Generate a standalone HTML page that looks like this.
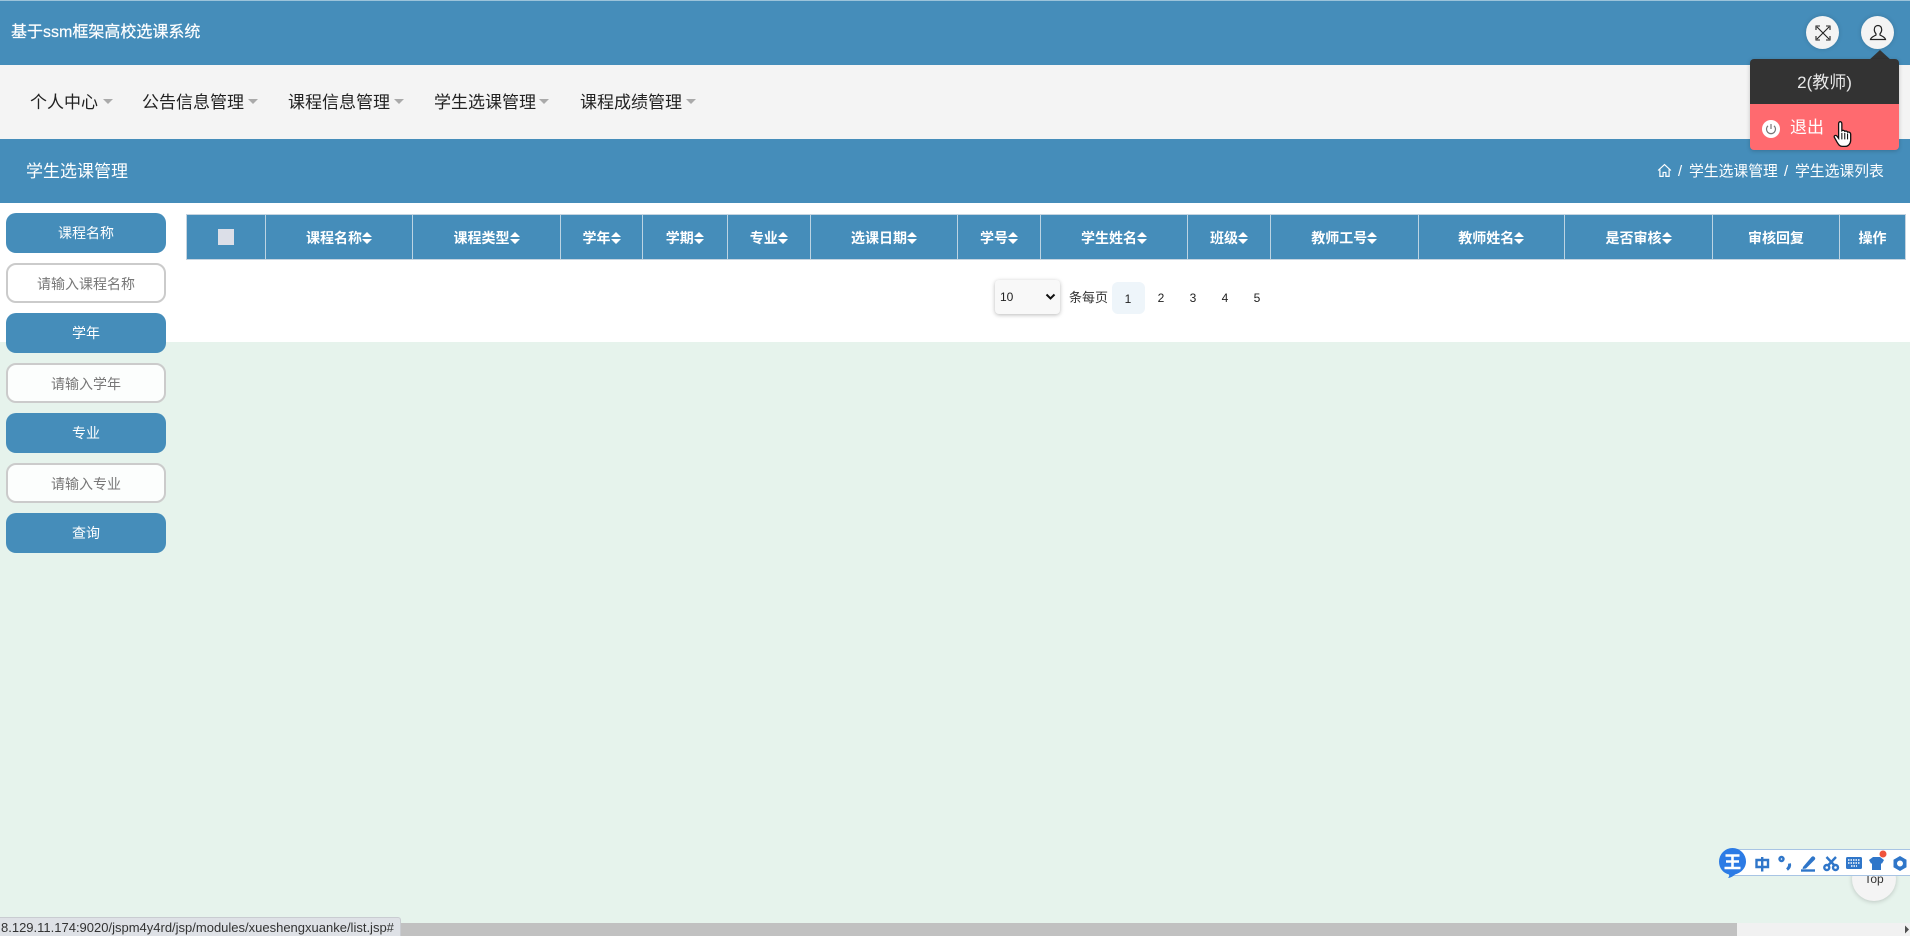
<!DOCTYPE html>
<html lang="zh">
<head>
<meta charset="utf-8">
<title>学生选课管理</title>
<style>
*{box-sizing:border-box;margin:0;padding:0}
html,body{width:1910px;height:936px;overflow:hidden;background:#e6f3ec;font-family:"Liberation Sans","Noto Sans CJK SC",sans-serif;color:#222}
.a{position:absolute}
#top{left:0;top:0;width:1910px;height:65px;background:#458dba;border-top:1px solid #9cc3da}
#title{left:11px;top:23px;font-size:16px;line-height:20px;color:#fff;white-space:nowrap;-webkit-text-stroke:.2px #fff}
.circle{width:33px;height:33px;border-radius:50%;background:#f4f4f4;top:16px;box-shadow:0 0 5px rgba(0,0,0,.15);display:flex;align-items:center;justify-content:center}
#nav{left:0;top:65px;width:1910px;height:74px;background:#f4f4f4}
.ni{top:92px;font-size:17px;line-height:22px;color:#222;white-space:nowrap}
.car{top:99px;width:0;height:0;border-left:5px solid transparent;border-right:5px solid transparent;border-top:5px solid #aaa}
#sub{left:0;top:139px;width:1910px;height:64px;background:#458dba}
#subt{left:26px;top:161px;font-size:17px;line-height:22px;color:#fff}
.bc{top:162px;font-size:14.8px;line-height:20px;color:#fff;white-space:nowrap}
#panel{left:0;top:203px;width:1910px;height:139px;background:#fff}
.sb{left:6px;width:160px;height:40px;border-radius:10px;background:#458dba;color:#fff;font-size:14px;text-align:center;line-height:40px}
.si{left:6px;width:160px;height:40px;border-radius:10px;border:2px solid #cbcbcb;background:rgba(255,255,255,.87);color:#777;font-size:14px;text-align:center;line-height:38px}
#thead{left:187px;top:215px;width:1718px;height:44px;background:#458dba;display:flex;box-shadow:0 0 0 1px #c5d4e0}
.th{height:44px;display:flex;align-items:center;justify-content:center;color:#fff;font-size:14px;font-weight:bold;border-right:1px solid #bcd4e3;white-space:nowrap;padding-top:1px}
.th:last-child{border-right:none}
.th svg{display:block}
#cb{left:218px;top:229px;width:16px;height:16px;background:#dcdfe8}
#sel{left:995px;top:280px;width:65px;height:34px;border-radius:4px;background:#f8f8f8;box-shadow:0 1px 4px rgba(0,0,0,.28);font-size:12px;line-height:34px;padding-left:5px;color:#222}
.pg{top:288px;font-size:12px;line-height:20px;color:#222;text-align:center;width:20px}
#p1{left:1112px;top:282px;width:33px;height:32px;background:#eef5fa;border-radius:6px}
#drop{left:1750px;top:59px;width:149px;height:91px;border-radius:4px;overflow:hidden;box-shadow:0 1px 4px rgba(0,0,0,.2)}
#d1{height:45px;background:#333;color:#e8e8e8;font-size:17px;line-height:47px;text-align:center}
#d2{height:46px;background:#ff6a6f;color:#fff;font-size:17px;line-height:48px;padding-left:40px}
#scr{left:0;top:923px;width:1910px;height:13px;background:#f1f1f1}
#thumb{left:401px;top:923px;width:1336px;height:13px;background:#c1c1c1}
#status{left:0;top:917px;width:401px;height:19px;background:#dee1e6;border-top:1px solid #c9ccd1;border-right:1px solid #c9ccd1;border-top-right-radius:3px;font-size:13px;line-height:19px;padding-left:1px;color:#333;white-space:nowrap;overflow:hidden}
#totop{left:1852px;top:857px;width:44px;height:44px;border-radius:50%;background:#f4f4f4;box-shadow:0 1px 5px rgba(0,0,0,.18);font-size:12px;color:#333;text-align:center;line-height:44px}
#ime{left:1733px;top:849px;width:177px;height:27px;background:#fff;border:1px solid #a8c4e4;border-right:none}
</style>
</head>
<body>
<div class="a" id="top"></div>
<div class="a" id="title">基于ssm框架高校选课系统</div>
<div class="a circle" style="left:1806px">
<svg width="20" height="20" viewBox="0 0 20 20" fill="none" stroke="#222" stroke-width="1.1"><path d="M4 4L16 16M16 4L4 16M3 7V3H7M13 3H17V7M3 13V17H7M17 13V17H13"/></svg>
</div>
<div class="a circle" style="left:1861px">
<svg width="20" height="20" viewBox="0 0 20 20" fill="none" stroke="#222" stroke-width="1.200"><path d="M10 2.500C7.600 2.500 6.300 4.300 6.300 6.600C6.300 8.800 7.300 10 8 10.800V12C6.500 13 3 14 2.500 16.500H17.500C17 14 13.500 13 12 12V10.800C12.700 10 13.700 8.800 13.700 6.600C13.700 4.300 12.400 2.500 10 2.500Z"/></svg>
</div>

<div class="a" id="nav"></div>
<div class="a ni" style="left:30px">个人中心</div><div class="a car" style="left:103px"></div>
<div class="a ni" style="left:142px">公告信息管理</div><div class="a car" style="left:248px"></div>
<div class="a ni" style="left:288px">课程信息管理</div><div class="a car" style="left:394px"></div>
<div class="a ni" style="left:434px">学生选课管理</div><div class="a car" style="left:539px"></div>
<div class="a ni" style="left:580px">课程成绩管理</div><div class="a car" style="left:686px"></div>

<div class="a" id="sub"></div>
<div class="a" id="subt">学生选课管理</div>
<svg class="a" style="left:1657px;top:163px" width="15" height="15" viewBox="0 0 14 14" fill="none" stroke="#fff" stroke-width="1.1"><path d="M1 7L7 1.500L13 7M2.700 6V12.500H5.700V8.800H8.300V12.500H11.300V6"/></svg>
<div class="a bc" style="left:1678px">/</div>
<div class="a bc" style="left:1689px">学生选课管理</div>
<div class="a bc" style="left:1784px">/</div>
<div class="a bc" style="left:1795px">学生选课列表</div>

<div class="a" id="panel"></div>

<div class="a sb" style="top:213px">课程名称</div>
<div class="a si" style="top:263px">请输入课程名称</div>
<div class="a sb" style="top:313px">学年</div>
<div class="a si" style="top:363px">请输入学年</div>
<div class="a sb" style="top:413px">专业</div>
<div class="a si" style="top:463px">请输入专业</div>
<div class="a sb" style="top:513px">查询</div>

<div class="a" id="thead">
<div class="th" style="width:79px"></div>
<div class="th" style="width:147px">课程名称<svg width="10" height="12" viewBox="0 0 10 12" fill="#fff"><path d="M5 0L10 5H0ZM0 7H10L5 12Z"/></svg></div>
<div class="th" style="width:148px">课程类型<svg width="10" height="12" viewBox="0 0 10 12" fill="#fff"><path d="M5 0L10 5H0ZM0 7H10L5 12Z"/></svg></div>
<div class="th" style="width:82px">学年<svg width="10" height="12" viewBox="0 0 10 12" fill="#fff"><path d="M5 0L10 5H0ZM0 7H10L5 12Z"/></svg></div>
<div class="th" style="width:84.5px">学期<svg width="10" height="12" viewBox="0 0 10 12" fill="#fff"><path d="M5 0L10 5H0ZM0 7H10L5 12Z"/></svg></div>
<div class="th" style="width:83.5px">专业<svg width="10" height="12" viewBox="0 0 10 12" fill="#fff"><path d="M5 0L10 5H0ZM0 7H10L5 12Z"/></svg></div>
<div class="th" style="width:147px">选课日期<svg width="10" height="12" viewBox="0 0 10 12" fill="#fff"><path d="M5 0L10 5H0ZM0 7H10L5 12Z"/></svg></div>
<div class="th" style="width:83px">学号<svg width="10" height="12" viewBox="0 0 10 12" fill="#fff"><path d="M5 0L10 5H0ZM0 7H10L5 12Z"/></svg></div>
<div class="th" style="width:147px">学生姓名<svg width="10" height="12" viewBox="0 0 10 12" fill="#fff"><path d="M5 0L10 5H0ZM0 7H10L5 12Z"/></svg></div>
<div class="th" style="width:83px">班级<svg width="10" height="12" viewBox="0 0 10 12" fill="#fff"><path d="M5 0L10 5H0ZM0 7H10L5 12Z"/></svg></div>
<div class="th" style="width:147.5px">教师工号<svg width="10" height="12" viewBox="0 0 10 12" fill="#fff"><path d="M5 0L10 5H0ZM0 7H10L5 12Z"/></svg></div>
<div class="th" style="width:146.5px">教师姓名<svg width="10" height="12" viewBox="0 0 10 12" fill="#fff"><path d="M5 0L10 5H0ZM0 7H10L5 12Z"/></svg></div>
<div class="th" style="width:148px">是否审核<svg width="10" height="12" viewBox="0 0 10 12" fill="#fff"><path d="M5 0L10 5H0ZM0 7H10L5 12Z"/></svg></div>
<div class="th" style="width:127px">审核回复</div>
<div class="th" style="width:65px">操作</div>
</div>
<div class="a" id="cb"></div>

<div class="a" id="sel">10</div>
<svg class="a" style="left:1045px;top:293px" width="11" height="8" viewBox="0 0 11 8" fill="none" stroke="#111" stroke-width="2"><path d="M1.500 1.500L5.500 5.500L9.500 1.500"/></svg>
<div class="a" style="left:1069px;top:288px;font-size:13px;line-height:20px;color:#333">条每页</div>
<div class="a" id="p1"></div>
<div class="a pg" style="left:1118px;top:289px">1</div>
<div class="a pg" style="left:1151px">2</div>
<div class="a pg" style="left:1183px">3</div>
<div class="a pg" style="left:1215px">4</div>
<div class="a pg" style="left:1247px">5</div>

<svg class="a" style="left:1868px;top:50px" width="24" height="11" viewBox="0 0 24 11"><path d="M12 0L24 11H0Z" fill="#333"/></svg>
<div class="a" id="drop">
<div id="d1">2(教师)</div>
<div id="d2">退出</div>
</div>
<svg class="a" style="left:1762px;top:120px" width="18" height="18" viewBox="0 0 18 18"><circle cx="9" cy="9" r="9" fill="#fff"/><path d="M9 4V9M6 5.800A4.500 4.500 0 1 0 12 5.800" fill="none" stroke="#777" stroke-width="1.200"/></svg>
<svg class="a" style="left:1833px;top:120px" width="22" height="28" viewBox="0 0 20 26"><path d="M5.500 2C6.800 1 8 2 8 3.500V10C9 9.300 10.300 9.500 10.700 10.500C11.800 10 13 10.300 13.300 11.300C14.500 10.900 16 11.500 16.200 13V19C16 22 14 24.500 11 24.500H8.500C6 24.500 5 23 3.500 20.500L1 16C0.500 14.700 2.200 13.500 3.500 15L5 17V3.500C5 3 5.200 2.400 5.500 2Z" fill="#fff" stroke="#111" stroke-width="1.200"/><path d="M8 12V18M10.700 12V18M13.300 12.500V18" stroke="#111" stroke-width="1"/></svg>

<div class="a" id="totop">Top</div>

<div class="a" id="ime"></div>
<svg class="a" style="left:1719px;top:848px" width="191" height="32" viewBox="0 0 191 32">
<path d="M13.500 0A13.500 13.500 0 0 1 27 13.500C27 20 22 25 16 26.500C14 28.500 11 30 9 30C10 29 10.500 27.500 10 26.500C4 25 0 20 0 13.500A13.500 13.500 0 0 1 13.500 0Z" fill="#2c7be5"/>
<path d="M6.500 7.500H20.500M7 13.500H20M5.500 20H21.500M13.500 7.500V20" stroke="#fff" stroke-width="2.600" fill="none"/>
<g fill="none" stroke="#2f76c9" stroke-width="2.400">
<path d="M37.500 12H49V19H37.500ZM43.200 9V23.500"/>
<circle cx="62.500" cy="11" r="2"/>
<path d="M70.500 15.500C71 18 70 20 68 21.500" stroke-width="3"/>
<path d="M82 22.500H96"/>
<path d="M107.500 9L116 18M117 9L108.500 18"/>
<circle cx="107.800" cy="19.500" r="2.500"/><circle cx="116.500" cy="19.500" r="2.500"/>
</g>
<path d="M84 19L92.500 9C93.500 8 94.500 8 95.500 9C96.500 10 96.500 11 95.500 12L87 20.500L83.500 21Z" fill="#2f76c9"/>
<rect x="127" y="9" width="16" height="12" rx="1.500" fill="#2f76c9"/>
<path d="M129 12H141M129 15H141M132 18H138" stroke="#fff" stroke-width="1.500" stroke-dasharray="1.500 1"/>
<path d="M150 12L154 9H161L165 12L163 15.500H162V22H153V15.500H152Z" fill="#2f76c9"/>
<circle cx="164" cy="6" r="3.500" fill="#f0543c"/>
<path fill-rule="evenodd" d="M181 8L187.500 11.750V19.250L181 23L174.500 19.250V11.750ZM181 12.500A3 3 0 1 0 181 18.500A3 3 0 1 0 181 12.500Z" fill="#2f76c9"/>
</svg>

<div class="a" id="scr"></div>
<div class="a" id="thumb"></div>
<svg class="a" style="left:1904px;top:925px" width="6" height="9" viewBox="0 0 6 9"><path d="M1 0.500L5 4.500L1 8.500Z" fill="#505050"/></svg>
<div class="a" id="status">8.129.11.174:9020/jspm4y4rd/jsp/modules/xueshengxuanke/list.jsp#</div>
</body>
</html>
